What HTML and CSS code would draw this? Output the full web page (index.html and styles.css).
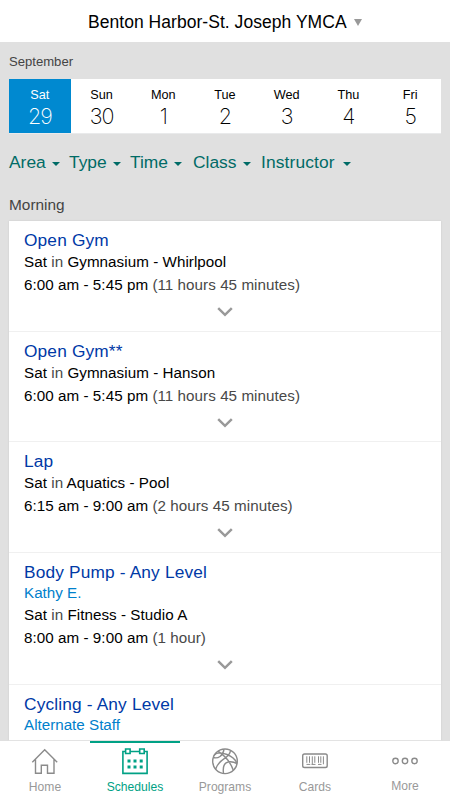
FILE: index.html
```
<!DOCTYPE html>
<html lang="en">
<head>
<meta charset="utf-8">
<title>Schedules</title>
<link rel="stylesheet" href="styles.css">
</head>
<body>
<div class="app">
  <header class="header">Benton Harbor-St. Joseph YMCA<span class="header-caret"></span></header>
  <main class="content">
    <div class="month">September</div>
    <div class="days">
      <div class="day selected"><span class="name">Sat</span><span class="num">29</span></div>
      <div class="day"><span class="name">Sun</span><span class="num">30</span></div>
      <div class="day"><span class="name">Mon</span><span class="num">1</span></div>
      <div class="day"><span class="name">Tue</span><span class="num">2</span></div>
      <div class="day"><span class="name">Wed</span><span class="num">3</span></div>
      <div class="day"><span class="name">Thu</span><span class="num">4</span></div>
      <div class="day"><span class="name">Fri</span><span class="num">5</span></div>
    </div>
    <div class="filters">
      <span class="filter">Area</span><span class="filter">Type</span><span class="filter">Time</span><span class="filter">Class</span><span class="filter">Instructor</span>
    </div>
    <div class="section">Morning</div>
    <div class="list">
      <article class="item">
        <h2>Open Gym</h2>
        <p>Sat <i>in</i> Gymnasium - Whirlpool</p>
        <p>6:00 am - 5:45 pm <i>(11 hours 45 minutes)</i></p>
        <svg class="chevron" viewBox="0 0 16 10"><path d="M1.2 1.2 8 7.800l6.800-6.600"/></svg>
      </article>
      <article class="item">
        <h2>Open Gym**</h2>
        <p>Sat <i>in</i> Gymnasium - Hanson</p>
        <p>6:00 am - 5:45 pm <i>(11 hours 45 minutes)</i></p>
        <svg class="chevron" viewBox="0 0 16 10"><path d="M1.2 1.2 8 7.800l6.800-6.600"/></svg>
      </article>
      <article class="item">
        <h2>Lap</h2>
        <p>Sat <i>in</i> Aquatics - Pool</p>
        <p>6:15 am - 9:00 am <i>(2 hours 45 minutes)</i></p>
        <svg class="chevron" viewBox="0 0 16 10"><path d="M1.2 1.2 8 7.800l6.800-6.600"/></svg>
      </article>
      <article class="item">
        <h2>Body Pump - Any Level</h2>
        <div class="staff">Kathy E.</div>
        <p>Sat <i>in</i> Fitness - Studio A</p>
        <p>8:00 am - 9:00 am <i>(1 hour)</i></p>
        <svg class="chevron" viewBox="0 0 16 10"><path d="M1.2 1.2 8 7.800l6.800-6.600"/></svg>
      </article>
      <article class="item">
        <h2>Cycling - Any Level</h2>
        <div class="staff">Alternate Staff</div>
        <p>Sat <i>in</i> Cycling Studio Whirlpool</p>
      </article>
    </div>
  </main>
  <nav class="tabs">
    <div class="tab">
      <svg viewBox="0 0 30 30"><path d="M2.300 15.300 14.700 2.800l12.500 12.500M5.500 12.500v13.700h5.800v-8h6.200v8h6.500V12.500"/></svg>
      <span>Home</span>
    </div>
    <div class="tab active">
      <svg viewBox="0 0 30 30"><path d="M5.500 4.500H2.900v21.900h24.200V4.500h-2.900M10.200 4.500h9.600"/><path d="M5.600 2h4.500v4.500H5.600zM19.700 2h4.500v4.500h-4.500z"/><path class="dots" d="M7.500 12.500h3v3h-3zM13.500 12.500h3v3h-3zM19.700 12.500h3v3h-3zM7.500 18.500h3v3h-3zM13.500 18.500h3v3h-3zM19.700 18.500h3v3h-3z"/></svg>
      <span>Schedules</span>
    </div>
    <div class="tab">
      <svg viewBox="0 0 30 30"><circle cx="15" cy="14.300" r="12.300"/><path d="M8 4.200c6 4 12.500 11 15.300 19M3.200 10.500c4.800 1.500 9.800-1.500 10.800-8.200M3.700 8.600c2.300-2.600 7.300-3.600 13.300-1.100 4 1.600 8 4.500 9.700 8.200M5.600 22.300c1.400-4.300 4-7.800 9-11 3.700-2.300 5.700-5 5.900-8M13.500 26.400c-.8-6 .5-10.600 4.700-11.400 3.300-.6 6.300.2 8.800 1.700"/></svg>
      <span>Programs</span>
    </div>
    <div class="tab">
      <svg viewBox="0 0 30 30"><rect x="2.700" y="7" width="24.500" height="13.500" rx="1.800"/><path class="bars" d="M6.800 9.300v6.500M9.500 9.300v6.500M12.300 9.300v8M14.800 9.300v6.500M18.500 9.300v6.500M20.800 9.300v6.500M23.400 9.300v8M6.500 17.400h3.800M11.500 17.400h4M18 17.400h3.500"/></svg>
      <span>Cards</span>
    </div>
    <div class="tab">
      <svg viewBox="0 0 30 30"><circle cx="5.500" cy="14" r="2.700"/><circle cx="15" cy="14" r="2.700"/><circle cx="24.500" cy="14" r="2.700"/></svg>
      <span class="raised">More</span>
    </div>
  </nav>
</div>
</body>
</html>
```
FILE: styles.css
```
* { box-sizing: border-box; }
body {
  margin: 0;
  font-family: "Liberation Sans", Arial, sans-serif;
  color: #000;
}
.app {
  width: 450px;
  height: 800px;
  display: flex;
  flex-direction: column;
  overflow: hidden;
  background: #e0e0e0;
  white-space: nowrap;
}
.header {
  height: 42px;
  flex: none;
  display: flex;
  align-items: center;
  padding: 3px 0 0 88px;
  background: #fff;
  font-size: 17.500px;
  letter-spacing: 0.040px;
}
.header-caret {
  margin-left: 7px;
  border: 4px solid transparent;
  border-top: 7px solid #999;
  border-bottom: 0;
}
.content {
  flex: 1;
  min-height: 0;
  overflow: hidden;
  padding: 0 9px;
}
.month {
  height: 37px;
  line-height: 40px;
  font-size: 13.100px;
  color: #444;
}
.days {
  display: grid;
  grid-template-columns: repeat(7, 1fr);
  height: 55px;
  background: #fff;
  border-bottom: 1px solid #e9eaeb;
}
.day {
  display: flex;
  flex-direction: column;
  align-items: center;
  padding-top: 7px;
}
.day.selected { background: #0089d0; color: #fff; }
.name { font-size: 12.700px; line-height: 18px; }
.num {
  font-family: Inter, "Liberation Sans", sans-serif;
  font-weight: 200;
  font-size: 21.500px;
  line-height: 25px;
  letter-spacing: -1px;
}
.filters {
  display: grid;
  grid-template-columns: 60px 61px 63px 68px auto;
  height: 56px;
  line-height: 58px;
  font-size: 17.400px;
  color: #006b66;
}
.filter { display: flex; align-items: center; height: 56px; }
.filter::after {
  content: "";
  margin: 3px 0 0 6px;
  border: 4px solid transparent;
  border-top-color: #006b66;
  border-bottom: 0;
}
.filter:last-child { letter-spacing: 0.120px; }
.filter:last-child::after { margin-left: 8px; }
.section {
  height: 30.700px;
  line-height: 29px;
  font-size: 15.400px;
  color: #444;
}
.list { background: #fff; box-shadow: 0 0 2px rgba(0, 0, 0, 0.100); }
.item {
  display: flex;
  flex-direction: column;
  padding: 9px 15px 13.900px;
  border-bottom: 1px solid #f0f0f0;
}
.item h2 {
  margin: 0;
  font-size: 17.300px;
  font-weight: 400;
  line-height: 20px;
  letter-spacing: 0.160px;
  color: #0039a6;
}
.item p { margin: 0; font-size: 15.200px; line-height: 23px; letter-spacing: 0.050px; }
.item i { font-style: normal; color: #484848; }
.staff { font-size: 15.200px; line-height: 21px; color: #0080cc; }
.chevron {
  width: 16px;
  height: 10px;
  margin: 11px auto 0;
  fill: none;
  stroke: #999;
  stroke-width: 2.500;
}
.tabs {
  flex: none;
  height: 60px;
  margin-top: -1px;
  display: grid;
  grid-template-columns: repeat(5, 1fr);
  background: #fff;
  background-clip: padding-box;
  border-top: 1px solid rgba(222, 222, 222, 0.850);
  position: relative;
}
.tab {
  display: flex;
  flex-direction: column;
  align-items: center;
  padding-top: 4px;
  border-top: 2px solid transparent;
  font-size: 12.100px;
  line-height: 14px;
  color: #999;
}
.tab svg {
  width: 30px;
  height: 30px;
  margin-bottom: 3px;
  fill: none;
  stroke: #8b8b8b;
  stroke-width: 1.400;
}
.active { color: #00a185; border-top-color: #00a185; }
.active svg { stroke: #00a185; stroke-width: 1.600; }
.tab .dots { fill: #00a185; stroke: none; }
.tab .bars { stroke-width: 1; }
.raised { margin-top: -1px; }
```
